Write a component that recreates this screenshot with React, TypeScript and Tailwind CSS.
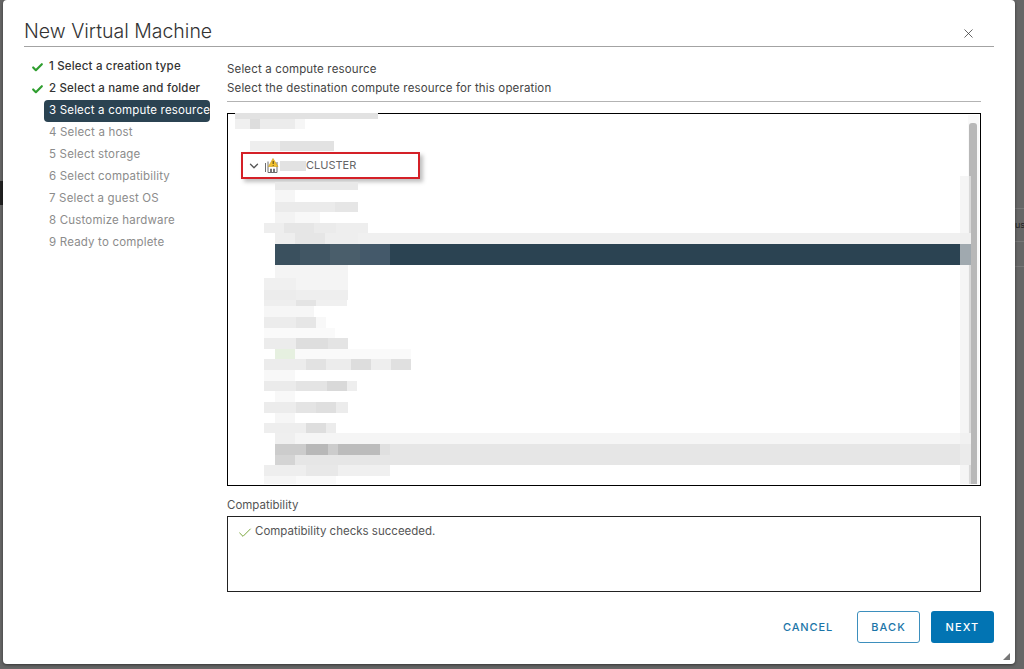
import { Check, ChevronDown, X } from "lucide-react";

const FONT = "font-['Inter','Liberation_Sans',sans-serif]";

const steps = [
  { label: "1 Select a creation type", state: "done" },
  { label: "2 Select a name and folder", state: "done" },
  { label: "3 Select a compute resource", state: "active" },
  { label: "4 Select a host", state: "todo" },
  { label: "5 Select storage", state: "todo" },
  { label: "6 Select compatibility", state: "todo" },
  { label: "7 Select a guest OS", state: "todo" },
  { label: "8 Customize hardware", state: "todo" },
  { label: "9 Ready to complete", state: "todo" },
];

// smudged tree rows: height, left offset, then [width, colour] chunks
type Row = { h: number; ml: number; bg?: string; chunks: [number, string][] };

const rowsAbove: Row[] = [
  { h: 5, ml: 7, chunks: [[143, "#e2e2e2"]] },
  { h: 10, ml: 7, chunks: [[15, "#f0f0f0"], [10, "#dddddd"], [35, "#ececec"], [10, "#f6f6f6"]] },
  { h: 12, ml: 0, chunks: [] },
  { h: 10, ml: 22, chunks: [[30, "#eeeeee"], [54, "#e2e2e2"]] },
];

const rowsBelow: Row[] = [
  { h: 3, ml: 0, chunks: [] },
  { h: 8, ml: 47, chunks: [[83, "#e9e9e9"]] },
  { h: 12, ml: 47, chunks: [[20, "#f6f6f6"]] },
  { h: 10, ml: 47, chunks: [[60, "#ebebeb"], [23, "#e6e6e6"]] },
  { h: 11, ml: 47, chunks: [[20, "#f3f3f3"], [25, "#f8f8f8"]] },
  { h: 10, ml: 36, chunks: [[20, "#eeeeee"], [30, "#e6e6e6"], [22, "#ebebeb"], [32, "#eeeeee"]] },
  { h: 11, ml: 47, bg: "#f0f0f0", chunks: [[20, "#eeeeee"], [30, "#e6e6e6"], [33, "#eeeeee"]] },
  { h: 21, ml: 47, bg: "#2b4352", chunks: [[25, "#3a505e"], [30, "#415664"], [30, "#4a5e6b"], [30, "#44596a"]] },
  { h: 13, ml: 47, chunks: [[73, "#f4f4f4"]] },
  { h: 12, ml: 36, chunks: [[32, "#f0f0f0"], [52, "#f4f4f4"]] },
  { h: 10, ml: 36, chunks: [[32, "#ececec"], [52, "#eeeeee"]] },
  { h: 6, ml: 36, chunks: [[32, "#eeeeee"], [20, "#e4e4e4"], [31, "#f0f0f0"]] },
  { h: 11, ml: 36, chunks: [[50, "#f6f6f6"]] },
  { h: 11, ml: 36, chunks: [[32, "#ececec"], [20, "#e6e6e6"], [10, "#f8f8f8"]] },
  { h: 10, ml: 36, chunks: [[71, "#fafafa"]] },
  { h: 11, ml: 36, chunks: [[32, "#ececec"], [32, "#dedede"], [20, "#e4e4e4"]] },
  { h: 10, ml: 47, chunks: [[20, "#e6f0e0"], [116, "#fafafa"]] },
  { h: 11, ml: 36, chunks: [[42, "#ececec"], [20, "#e2e2e2"], [25, "#ececec"], [20, "#dddddd"], [20, "#eeeeee"], [20, "#e0e0e0"]] },
  { h: 11, ml: 36, chunks: [[31, "#f8f8f8"]] },
  { h: 10, ml: 36, chunks: [[32, "#ebebeb"], [31, "#e4e4e4"], [20, "#d9d9d9"], [10, "#eeeeee"]] },
  { h: 11, ml: 47, chunks: [[20, "#f8f8f8"]] },
  { h: 11, ml: 36, chunks: [[32, "#ececec"], [20, "#e4e4e4"], [20, "#dfdfdf"], [12, "#ececec"]] },
  { h: 10, ml: 47, chunks: [[20, "#f6f6f6"]] },
  { h: 10, ml: 36, chunks: [[42, "#eeeeee"], [20, "#dedede"], [10, "#ececec"]] },
  { h: 11, ml: 47, bg: "#f5f5f5", chunks: [[20, "#efefef"]] },
  { h: 11, ml: 47, bg: "#e6e6e6", chunks: [[31, "#cccccc"], [22, "#b8b8b8"], [10, "#cccccc"], [42, "#bcbcbc"], [10, "#e0e0e0"]] },
  { h: 10, ml: 47, bg: "#e6e6e6", chunks: [[20, "#d4d4d4"]] },
  { h: 11, ml: 36, chunks: [[42, "#eeeeee"], [32, "#e8e8e8"], [52, "#f0f0f0"]] },
  { h: 8, ml: 36, chunks: [[32, "#f6f6f6"], [40, "#fafafa"]] },
];

function SmudgeRows({ rows }: { rows: Row[] }) {
  return (
    <>
      {rows.map((row, i) => (
        <div key={i} className="relative z-10 flex w-full shrink-0 pr-[9px]" style={{ height: row.h }}>
          <div className="flex h-full grow" style={{ marginLeft: row.ml, backgroundColor: row.bg }}>
            {row.chunks.map(([w, c], j) => (
              <div key={j} className="h-full" style={{ width: w, backgroundColor: c }} />
            ))}
          </div>
        </div>
      ))}
    </>
  );
}

function ClusterIcon() {
  return (
    <svg width="16" height="16" viewBox="0 0 16 16" className="ml-[3px]">
      <path d="M1.5 5v9M4 3.5v11h9V4" fill="none" stroke="#6f6f6f" strokeWidth="1" />
      <path d="M6.5 14v-3h1v3M9.5 14v-3h1v3" fill="none" stroke="#777777" strokeWidth="1" />
      <path d="M9 0.5 L14 8.5 H4.5 Z" fill="#f2c230" stroke="#c99a1a" strokeWidth="0.6" />
      <path d="M9.2 3v3M9.2 7v0.8" stroke="#4a3a10" strokeWidth="1" />
    </svg>
  );
}

export default function App() {
  return (
    <div className={`${FONT} flex h-[669px] w-[1024px] overflow-hidden bg-[#666666]`}>
      {/* page behind the dialog */}
      <div className="flex w-[3px] shrink-0 flex-col pt-[181px]">
        <div className="h-[24px] bg-[#222222]" />
      </div>

      <div className="relative flex h-[664px] w-[1012px] shrink-0 flex-col rounded-[4px] bg-white px-[21px] shadow-[0_1px_3px_rgba(0,0,0,0.5)]">
        <div className="flex h-[47px] shrink-0 items-end border-b border-[#a3a3a3] pb-[2px]">
          <h1 className="grow text-[19.5px] leading-[26px] font-light text-[#333333]">New Virtual Machine</h1>
          <X size={15} strokeWidth={1.2} className="mr-[18px] mb-[3px] text-[#333333]" />
        </div>

        <div className="flex h-[518px] shrink-0">
          <nav className="flex w-[203px] shrink-0 flex-col pt-[9px] pl-[7px]">
            {steps.map((s) => (
              <div key={s.label} className="flex h-[22px] items-center">
                <div className="flex w-[13px] justify-center">
                  {s.state === "done" && <Check size={13} strokeWidth={4} className="text-[#2f9e2f]" />}
                </div>
                <div
                  className={`flex h-[22px] w-[166px] items-center rounded-[4px] pl-[5px] text-[11.5px] tracking-[0.18px] whitespace-nowrap ${
                    s.state === "active"
                      ? "bg-[#2b4352] text-white"
                      : s.state === "done"
                        ? "font-medium text-[#333333]"
                        : "text-[#8c8c8c]"
                  }`}
                >
                  {s.label}
                </div>
              </div>
            ))}
          </nav>

          <div className="flex w-[754px] shrink-0 flex-col">
            <div className="flex h-[55px] shrink-0 flex-col border-b border-[#b3b3b3] pt-[13px] text-[11.5px] tracking-[0.15px] text-[#444444]">
              <div className="h-[19px] leading-[18px]">Select a compute resource</div>
              <div className="leading-[18px]">Select the destination compute resource for this operation</div>
            </div>

            <div className="relative mt-[11px] flex h-[373px] shrink-0 flex-col border border-black">
              <div className="absolute -top-[1px] left-[7px] h-[1px] w-[143px] bg-[#e2e2e2]" />
              <SmudgeRows rows={rowsAbove} />
              <div className="h-[1px] shrink-0" />
              <div className="relative z-10 ml-[13px] flex h-[27px] w-[179px] shrink-0 items-center border-2 border-[#d42027] pl-[4px] shadow-[3px_3px_4px_rgba(0,0,0,0.25)]">
                <ChevronDown size={14} strokeWidth={2.2} className="text-[#555555]" />
                <ClusterIcon />
                <div className="h-[10px] w-[26px] bg-[#e2e2e2]" />
                <span className="text-[11px] text-[#666666]">CLUSTER</span>
              </div>
              <SmudgeRows rows={rowsBelow} />

              {/* scrollbar sits over the rows */}
              <div className="absolute top-[1px] right-[1px] bottom-[1px] w-[11px] bg-[#f4f4f4]/50 pl-[1px]">
                <div className="mt-[8px] h-[calc(100%-8px)] w-[8px] rounded-t-[3px] bg-[#b8b8b8]" />
              </div>
              <div className="absolute top-[62px] right-[9px] bottom-[1px] z-20 w-[11px] bg-[#eeeeee]/60" />
            </div>

            <div className="mt-[12px] h-[18px] shrink-0 text-[11.5px] leading-[14px] text-[#555555]">Compatibility</div>
            <div className="flex h-[76px] shrink-0 items-start border border-[#222222] pt-[6px] pl-[9px]">
              <Check size={16} strokeWidth={1.5} className="mt-[2px] text-[#7aa63c]" />
              <span className="ml-[2px] text-[11.5px] leading-[16px] text-[#555555]">Compatibility checks succeeded.</span>
            </div>
          </div>
        </div>

        <div className="flex shrink-0 items-center justify-end pt-[46px]">
          <button className="mr-[24px] text-[11px] font-medium tracking-[0.85px] text-[#1b75a8]">CANCEL</button>
          <button className="mr-[11px] h-[32px] w-[63px] rounded-[3px] border border-[#3d8fbd] text-[11px] font-medium tracking-[1.1px] text-[#1b75a8]">BACK</button>
          <button className="h-[32px] w-[63px] rounded-[3px] bg-[#0274b3] text-[11px] font-medium tracking-[1.1px] text-white">NEXT</button>
        </div>

        <svg width="7" height="7" viewBox="0 0 7 7" className="absolute right-[5px] bottom-[4px]">
          <path d="M7 0V7H0Z" fill="#777777" />
        </svg>
      </div>

      {/* right edge of the page behind */}
      <div className="flex grow flex-col text-[9px] text-[#222222]">
        <div className="h-[209px] border-b border-[#777777]" />
        <div className="flex h-[33px] items-center border-b border-[#777777] whitespace-nowrap">
          <span>us</span>
        </div>
        <div className="h-[25px] border-b border-[#777777]" />
      </div>
    </div>
  );
}
